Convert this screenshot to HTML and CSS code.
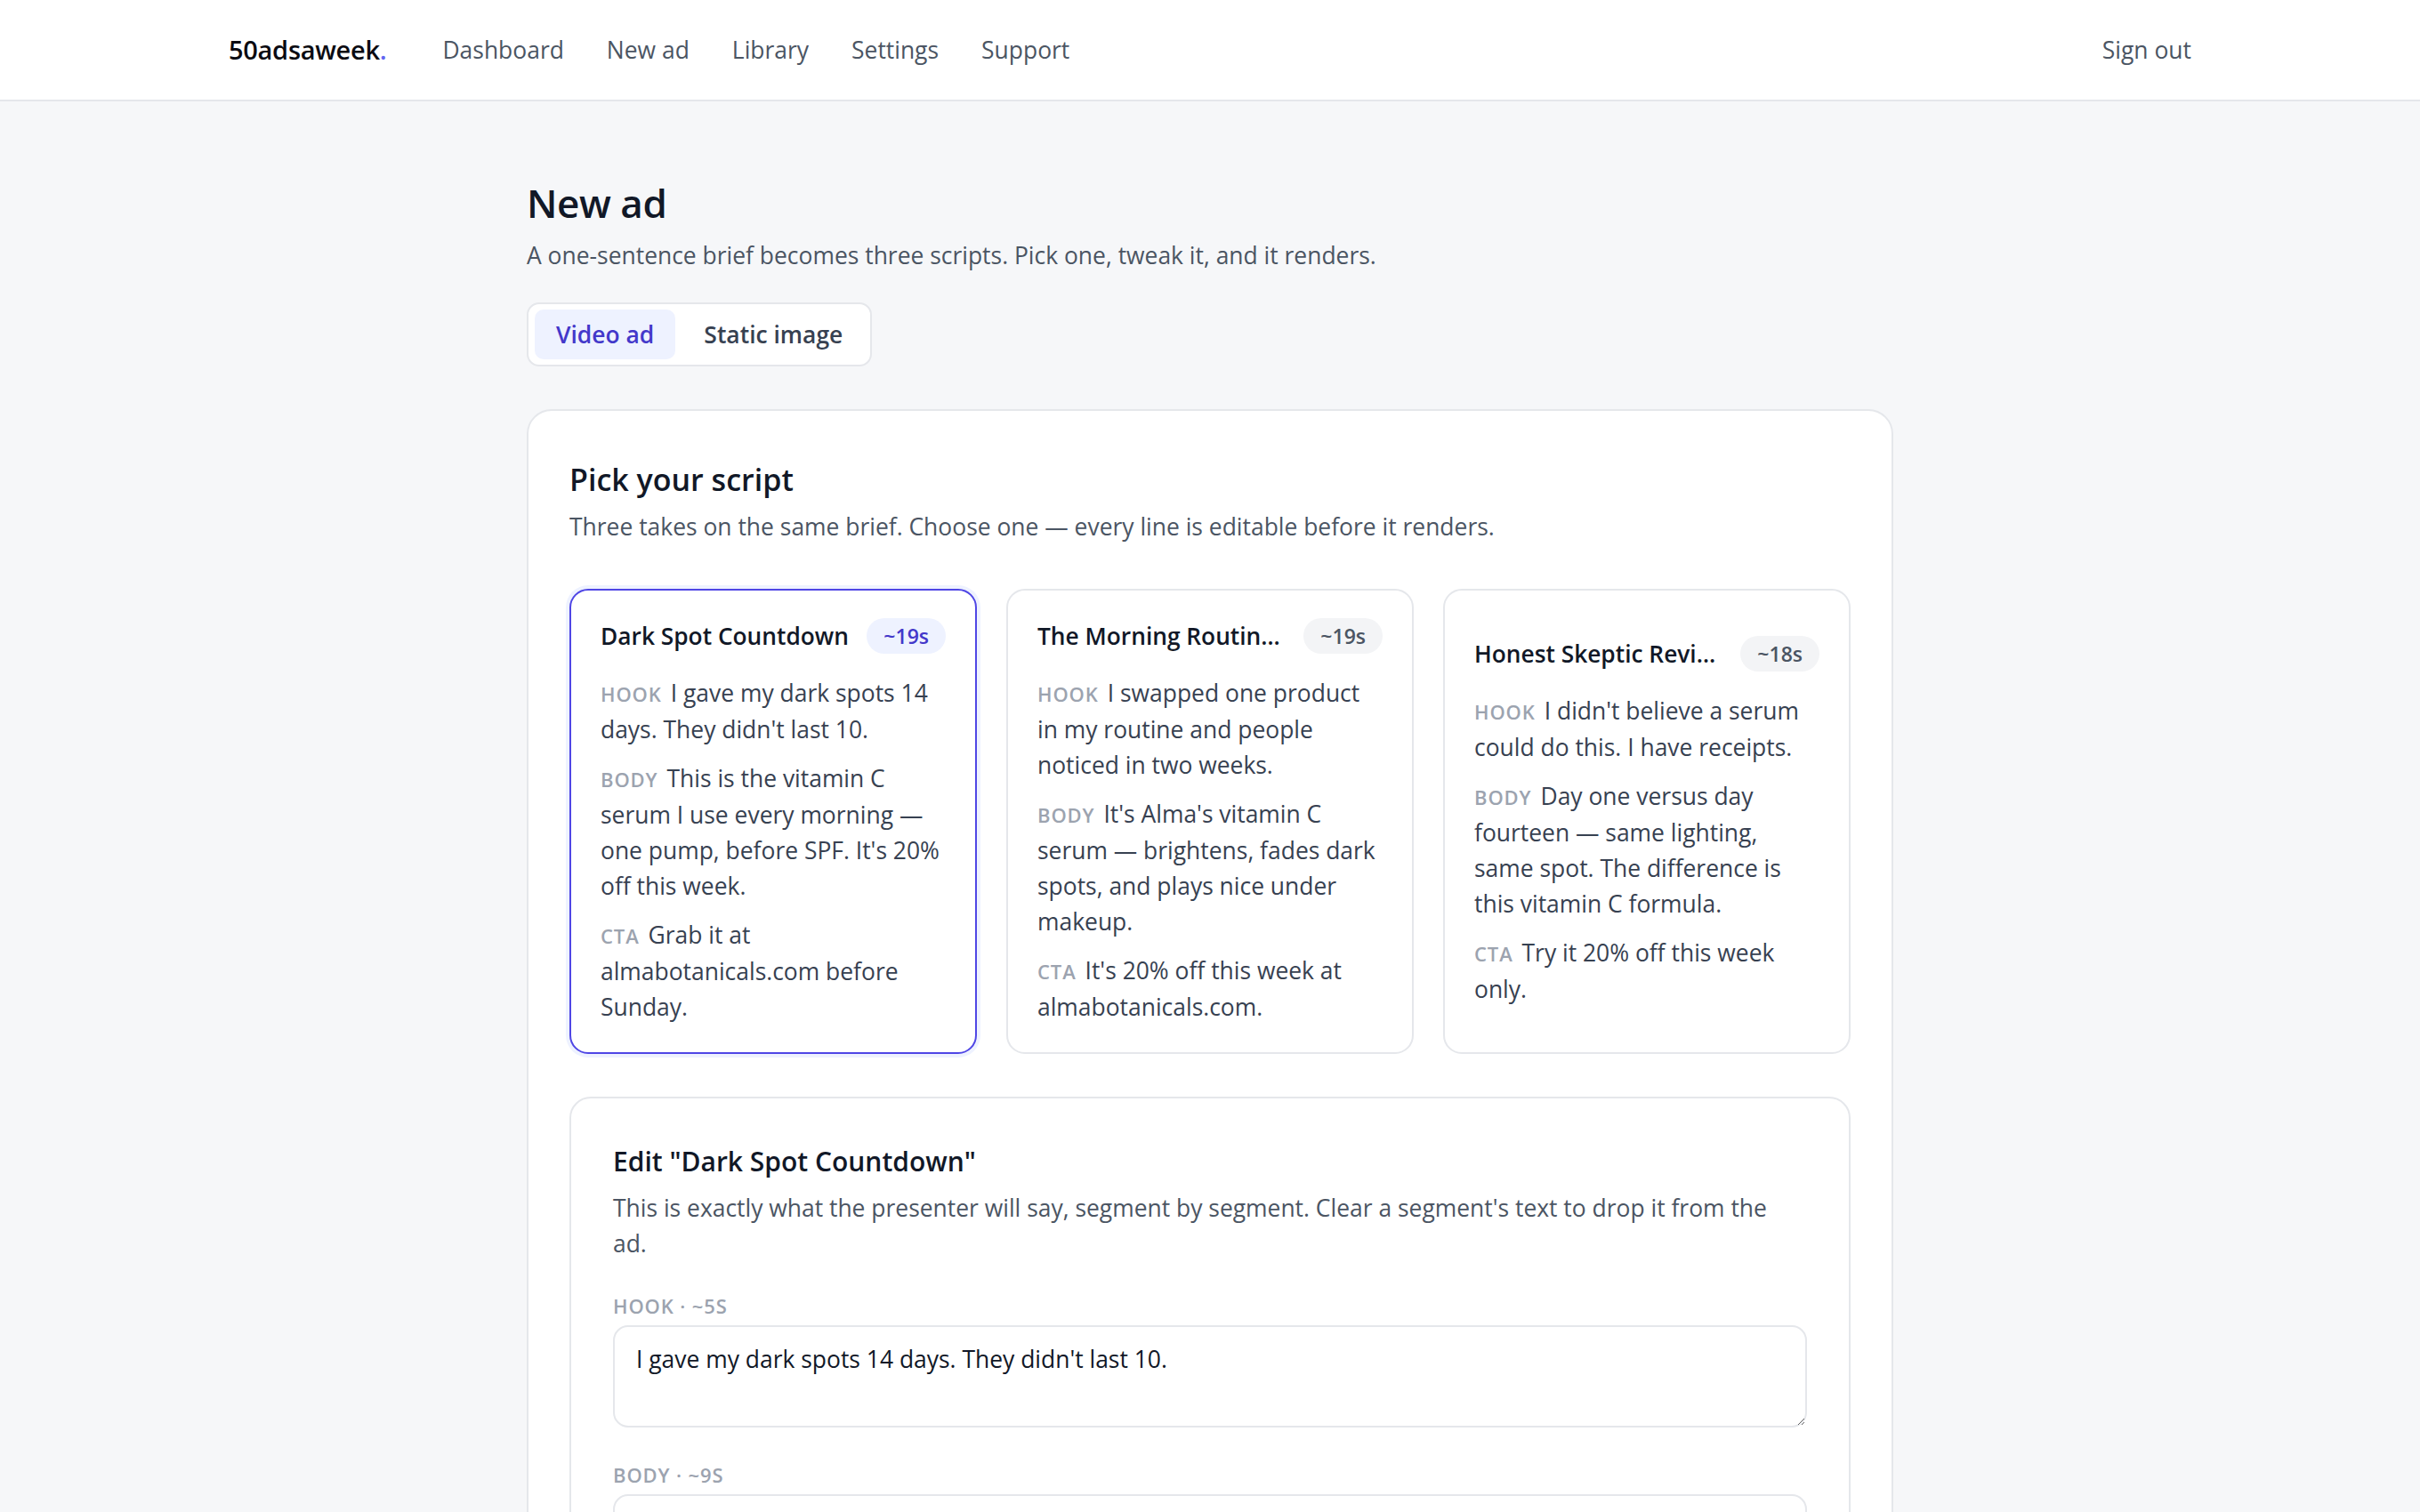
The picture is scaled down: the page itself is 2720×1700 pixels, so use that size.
FILE: index.html
```html
<!DOCTYPE html>
<html lang="en">
<head>
<meta charset="utf-8">
<title>New ad · 50adsaweek</title>
<link rel="stylesheet" href="styles.css">
</head>
<body>
<header class="topbar">
  <div class="topbar-inner">
    <a class="logo" href="#">50adsaweek<span class="logo-dot">.</span></a>
    <nav class="nav-links">
      <a class="nav-link" href="#">Dashboard</a>
      <a class="nav-link" href="#">New ad</a>
      <a class="nav-link" href="#">Library</a>
      <a class="nav-link" href="#">Settings</a>
      <a class="nav-link" href="#">Support</a>
    </nav>
    <a class="nav-link signout" href="#">Sign out</a>
  </div>
</header>

<main class="page">
  <h1 class="page-title">New ad</h1>
  <p class="page-sub">A one-sentence brief becomes three scripts. Pick one, tweak it, and it renders.</p>

  <div class="seg">
    <button class="seg-btn active" type="button">Video ad</button>
    <button class="seg-btn" type="button">Static image</button>
  </div>

  <section class="panel">
    <h2 class="panel-title">Pick your script</h2>
    <p class="panel-sub">Three takes on the same brief. Choose one — every line is editable before it renders.</p>

    <div class="scripts">
      <button class="script selected" type="button">
        <span class="script-head">
          <span class="script-title">Dark Spot Countdown</span>
          <span class="badge">~19s</span>
        </span>
        <span class="seg-line"><span class="seg-label">HOOK</span>I gave my dark spots 14 days. They didn't last 10.</span>
        <span class="seg-line"><span class="seg-label">BODY</span>This is the vitamin C serum I use every morning — one pump, before SPF. It's 20% off this week.</span>
        <span class="seg-line"><span class="seg-label">CTA</span>Grab it at almabotanicals.com before Sunday.</span>
      </button>

      <button class="script" type="button">
        <span class="script-head">
          <span class="script-title">The Morning Routine Swap</span>
          <span class="badge">~19s</span>
        </span>
        <span class="seg-line"><span class="seg-label">HOOK</span>I swapped one product in my routine and people noticed in two weeks.</span>
        <span class="seg-line"><span class="seg-label">BODY</span>It's Alma's vitamin C serum — brightens, fades dark spots, and plays nice under makeup.</span>
        <span class="seg-line"><span class="seg-label">CTA</span>It's 20% off this week at almabotanicals.com.</span>
      </button>

      <button class="script" type="button">
        <span class="script-head">
          <span class="script-title">Honest Skeptic Review Test</span>
          <span class="badge">~18s</span>
        </span>
        <span class="seg-line"><span class="seg-label">HOOK</span>I didn't believe a serum could do this. I have receipts.</span>
        <span class="seg-line"><span class="seg-label">BODY</span>Day one versus day fourteen — same lighting, same spot. The difference is this vitamin C formula.</span>
        <span class="seg-line"><span class="seg-label">CTA</span>Try it 20% off this week only.</span>
      </button>
    </div>

    <section class="editor">
      <h3 class="editor-title">Edit "Dark Spot Countdown"</h3>
      <p class="editor-sub">This is exactly what the presenter will say, segment by segment. Clear a segment's text to drop it from the ad.</p>

      <div class="field">
        <label class="field-label" for="f-hook">Hook · ~5s</label>
        <textarea class="field-input" id="f-hook" rows="2">I gave my dark spots 14 days. They didn't last 10.</textarea>
      </div>
      <div class="field">
        <label class="field-label" for="f-body">Body · ~9s</label>
        <textarea class="field-input" id="f-body" rows="2">This is the vitamin C serum I use every morning — one pump, before SPF. It's 20% off this week.</textarea>
      </div>
      <div class="field">
        <label class="field-label" for="f-cta">CTA · ~5s</label>
        <textarea class="field-input" id="f-cta" rows="2">Grab it at almabotanicals.com before Sunday.</textarea>
      </div>
    </section>
  </section>
</main>
</body>
</html>
```

FILE: styles.css
```css
* {
  box-sizing: border-box;
}

html,
body {
  margin: 0;
}

body {
  background: #f6f7f9;
  font-family: "Open Sans", "Noto Sans", sans-serif;
  color: #111827;
  font-size: 26.45px;
  line-height: 40px;
}

/* top bar */
.topbar {
  background: #fff;
  border-bottom: 2px solid #e5e7eb;
}

.topbar-inner {
  max-width: 2206px;
  height: 112px;
  margin: 0 auto;
  display: flex;
  align-items: center;
}

.logo {
  font-size: 29px;
  font-weight: 600;
  color: #0b0b12;
  text-decoration: none;
  letter-spacing: -0.01em;
  margin-right: 63px;
}

.logo-dot {
  color: #6366f1;
}

.nav-links {
  display: flex;
  gap: 48px;
  flex: 1;
}

.nav-link {
  color: #4b5563;
  text-decoration: none;
  font-size: 26.45px;
}

/* page */
.page {
  width: 1536px;
  margin: 0 auto;
  padding-top: 88px;
}

.page-title {
  margin: 0;
  font-size: 44px;
  line-height: 53px;
  font-weight: 600;
  letter-spacing: -0.01em;
}

.page-sub {
  margin: 12px 0 0;
  color: #4b5563;
}

.seg {
  display: inline-flex;
  gap: 8px;
  margin-top: 33px;
  padding: 6px 7px;
  background: #fff;
  border: 2px solid #e5e7eb;
  border-radius: 14px;
}

.seg-btn {
  font: inherit;
  font-weight: 600;
  padding: 8px 24px;
  border: 0;
  border-radius: 10px;
  background: transparent;
  color: #374151;
}

.seg-btn.active {
  background: #eef2ff;
  color: #4338ca;
}

/* panel */
.panel {
  margin-top: 48px;
  background: #fff;
  border: 2px solid #e5e7eb;
  border-radius: 28px;
  padding: 50px 46px 48px;
}

.panel-title {
  margin: 0;
  font-size: 34px;
  line-height: 54px;
  font-weight: 600;
}

.panel-sub {
  margin: 6px 0 0;
  color: #4b5563;
}

.scripts {
  display: grid;
  grid-template-columns: repeat(3, minmax(0, 1fr));
  gap: 33px;
  margin-top: 50px;
}

.script {
  display: flex;
  flex-direction: column;
  justify-content: center;
  min-width: 0;
  padding: 31px 35px 31px 33px;
  border: 2px solid #e5e7eb;
  border-radius: 21px;
  background: #fff;
  font: inherit;
  color: inherit;
  text-align: left;
  cursor: pointer;
}

.script.selected {
  border-color: #4f46e5;
  box-shadow: 0 0 0 4px #eef2ff;
}

.script-head {
  display: flex;
  align-items: center;
  gap: 16px;
  margin-right: -2px;
  margin-bottom: 24px;
}

.script-title {
  flex: 1;
  min-width: 0;
  font-size: 26.3px;
  font-weight: 600;
  color: #111827;
  white-space: nowrap;
  overflow: hidden;
  text-overflow: ellipsis;
}

.badge {
  flex: none;
  height: 40px;
  padding: 0 19px;
  border-radius: 999px;
  background: #f3f4f6;
  color: #4b5563;
  font-size: 23px;
  line-height: 40px;
  font-weight: 600;
}

.script.selected .badge {
  background: #eef2ff;
  color: #4338ca;
}

.seg-line {
  display: block;
  color: #374151;
}

.seg-line + .seg-line {
  margin-top: 15px;
}

.seg-label {
  font-size: 22px;
  font-weight: 600;
  color: #9ca3af;
  letter-spacing: 0.04em;
  margin-right: 10px;
}

/* editor */
.editor {
  margin-top: 48px;
  border: 2px solid #e5e7eb;
  border-radius: 24px;
  padding: 48px 47px;
}

.editor-title {
  margin: 0;
  font-size: 30px;
  line-height: 46px;
  font-weight: 600;
}

.editor-sub {
  margin: 9px 0 0;
  color: #4b5563;
  max-width: 1305px;
}

.field-label {
  display: block;
  margin-top: 34px;
  font-size: 22px;
  line-height: 32px;
  font-weight: 600;
  color: #9ca3af;
  letter-spacing: 0.04em;
  text-transform: uppercase;
}

.field + .field .field-label {
  margin-top: 37px;
}

.field-input {
  display: block;
  width: 100%;
  height: 115px;
  margin-top: 6px;
  padding: 16px 24px;
  border: 2px solid #e5e7eb;
  border-radius: 17px;
  background: #fff;
  font: inherit;
  color: #111827;
  resize: vertical;
}
```
